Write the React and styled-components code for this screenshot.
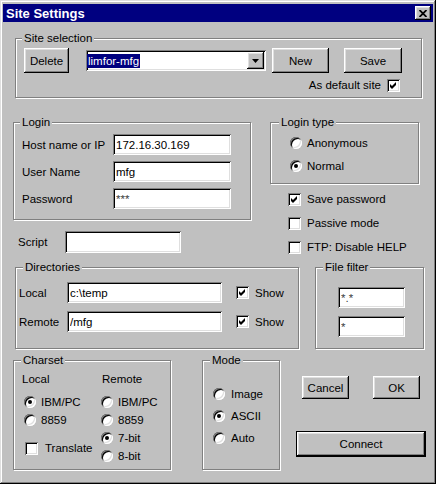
import React from "react";
import styled, { createGlobalStyle } from "styled-components";

const GlobalStyle = createGlobalStyle`
  html, body {
    margin: 0;
    padding: 0;
    background: #c0c0c0;
  }
  body {
    font-family: "Liberation Sans", Arial, sans-serif;
    font-size: 11.5px;
    color: #000;
  }
`;

const raised = `
  box-shadow: inset -1px -1px #000, inset 1px 1px #fff,
    inset -2px -2px #808080, inset 2px 2px #dfdfdf;
`;

const sunken = `
  box-shadow: inset 1px 1px #808080, inset -1px -1px #fff,
    inset 2px 2px #000, inset -2px -2px #dfdfdf;
`;

const Window = styled.div`
  box-sizing: border-box;
  width: 436px;
  height: 484px;
  padding-top: 4px;
  background: #c0c0c0;
  box-shadow: inset -1px -1px #000, inset 1px 1px #dfdfdf,
    inset -2px -2px #808080, inset 2px 2px #fff;
`;

const TitleBar = styled.div`
  display: flex;
  align-items: center;
  justify-content: space-between;
  height: 18px;
  margin: 0 3px;
  padding: 0 2px 0 3px;
  background: #000080;
  color: #fff;
  font-weight: bold;
  font-size: 13px;
`;

const CloseButton = styled.span`
  display: flex;
  align-items: center;
  justify-content: center;
  width: 16px;
  height: 14px;
  background: #c0c0c0;
  ${raised}
`;

const Row = styled.div`
  display: flex;
  align-items: flex-start;
  margin-top: ${(p) => p.$top}px;
`;

const Column = styled.div`
  display: flex;
  flex-direction: column;
  margin-left: ${(p) => p.$left || 0}px;
`;

const Group = styled.div`
  position: relative;
  box-sizing: border-box;
  width: ${(p) => p.$w}px;
  height: ${(p) => p.$h}px;
  margin-left: ${(p) => p.$left || 0}px;
  border: 1px solid #808080;
  box-shadow: inset 1px 1px #fff, 1px 1px #fff;
`;

const Legend = styled.span`
  position: absolute;
  top: -8px;
  left: ${(p) => (p.$left === undefined ? 7 : p.$left)}px;
  padding: 0 2px;
  line-height: 14px;
  background: #c0c0c0;
  white-space: nowrap;
`;

const Button = styled.button`
  box-sizing: border-box;
  width: ${(p) => p.$w}px;
  height: ${(p) => p.$h || 25}px;
  margin-left: ${(p) => p.$left || 0}px;
  padding: 0;
  border: none;
  background: #c0c0c0;
  font: inherit;
  color: #000;
  ${raised}
`;

const DefaultButton = styled(Button)`
  border: 1px solid #000;
`;

const Field = styled.input`
  box-sizing: border-box;
  width: ${(p) => p.$w}px;
  height: ${(p) => p.$h || 21}px;
  margin: 0;
  padding: 0 3px;
  border: none;
  outline: none;
  background: #fff;
  font: inherit;
  color: ${(p) => (p.$dim ? "#404040" : "#000")};
  ${sunken}
`;

const Box = styled.span`
  box-sizing: border-box;
  display: inline-flex;
  align-items: center;
  justify-content: center;
  flex-shrink: 0;
  width: 13px;
  height: 13px;
  margin-left: ${(p) => p.$left || 0}px;
  background: #fff;
  ${sunken}
`;

const Dot = styled.span`
  position: relative;
  box-sizing: border-box;
  flex-shrink: 0;
  width: 12px;
  height: 12px;
  margin-left: ${(p) => p.$left || 0}px;
  border-radius: 50%;
  background: #fff;
  ${sunken}

  &::after {
    content: "";
    display: ${(p) => (p.$on ? "block" : "none")};
    position: absolute;
    left: 4px;
    top: 4px;
    width: 4px;
    height: 4px;
    border-radius: 50%;
    background: #000;
  }
`;

const Option = styled.label`
  display: flex;
  align-items: center;
  gap: ${(p) => p.$gap || 5}px;
  height: ${(p) => p.$h || 20}px;
  white-space: nowrap;
`;

const CheckMark = () => (
  <svg width="7" height="7" viewBox="0 0 7 7">
    <polygon points="0,2 2,4 6,0 6,3 2,7 0,5" fill="#000" />
  </svg>
);

const Check = ({ on, left, gap = 6, h, children }) => (
  <Option $gap={gap} $h={h}>
    <Box $left={left}>{on && <CheckMark />}</Box>
    {children && <span>{children}</span>}
  </Option>
);

const Radio = ({ on, left, gap = 5, h, children }) => (
  <Option $gap={gap} $h={h}>
    <Dot $on={on} $left={left} />
    <span>{children}</span>
  </Option>
);

/* site selection */

const SiteGroup = styled(Group)`
  margin-top: 16px;
  padding: 9px 0 0 8px;
`;

const SiteTop = styled.div`
  display: flex;
  align-items: center;
`;

const Combo = styled.div`
  box-sizing: border-box;
  display: flex;
  align-items: center;
  width: 180px;
  height: 21px;
  margin-left: 17px;
  padding: 0 2px 0 1px;
  background: #fff;
  ${sunken}
`;

const Selected = styled.span`
  padding: 0 1px;
  line-height: 14px;
  background: #000080;
  color: #fff;
`;

const DropButton = styled.span`
  display: flex;
  align-items: center;
  justify-content: center;
  width: 17px;
  height: 17px;
  margin-left: auto;
  background: #c0c0c0;
  ${raised}
`;

const DefaultRow = styled.div`
  display: flex;
  justify-content: flex-end;
  margin: 5px 21px 0 0;
`;

/* login */

const LoginGroup = styled(Group)`
  padding: 11px 0 0 8px;
`;

const FieldGrid = styled.div`
  display: grid;
  grid-template-columns: 91px 118px;
  grid-auto-rows: 21px;
  row-gap: 6px;
  align-items: center;
`;

const LabeledRow = styled.div`
  display: flex;
  align-items: center;
  margin: ${(p) => p.$margin || "0"};
`;

const FieldLabel = styled.span`
  width: ${(p) => p.$w}px;
  flex-shrink: 0;
`;

const TypeGroup = styled(Group)`
  padding: 10px 0 0 19px;
  display: flex;
  flex-direction: column;
  gap: 3px;
`;

const OptionList = styled.div`
  display: flex;
  flex-direction: column;
  gap: ${(p) => p.$gap || 0}px;
  margin: ${(p) => p.$margin || "0"};
`;

/* directories */

const DirGroup = styled(Group)`
  padding: 14px 0 0 3px;
  display: flex;
  flex-direction: column;
  gap: 8px;
`;

const FilterGroup = styled(Group)`
  padding: 19px 0 0 22px;
  display: flex;
  flex-direction: column;
  gap: 8px;
`;

/* charset / mode */

const CharsetGroup = styled(Group)`
  display: flex;
  padding: 10px 0 0 8px;
`;

const CharCol = styled.div`
  width: ${(p) => p.$w}px;
`;

const ColHeader = styled.div`
  line-height: 16px;
  padding-left: ${(p) => p.$pad || 0}px;
`;

const ModeGroup = styled(Group)`
  padding: 22px 0 0 10px;
`;

const ButtonColumn = styled.div`
  width: 130px;
  margin-left: 16px;
`;

const ButtonPair = styled.div`
  display: flex;
  margin-top: 16px;
  padding-left: 6px;
`;

const ConnectRow = styled.div`
  margin-top: 32px;
`;

export default function App() {
  return (
    <>
      <GlobalStyle />
      <Window>
        <TitleBar>
          <span>Site Settings</span>
          <CloseButton>
            <svg width="8" height="7" viewBox="0 0 8 7">
              <path d="M0.5 0 L7.5 7 M7.5 0 L0.5 7" stroke="#000" strokeWidth="1.8" />
            </svg>
          </CloseButton>
        </TitleBar>

        <SiteGroup $w={407} $h={60} $left={15}>
          <Legend $left={6}>Site selection</Legend>
          <SiteTop>
            <Button $w={45}>Delete</Button>
            <Combo>
              <Selected>limfor-mfg</Selected>
              <DropButton>
                <svg width="7" height="4" viewBox="0 0 7 4">
                  <polygon points="0,0 7,0 3.5,4" fill="#000" />
                </svg>
              </DropButton>
            </Combo>
            <Button $w={57} $left={6}>New</Button>
            <Button $w={58} $left={15}>Save</Button>
          </SiteTop>
          <DefaultRow>
            <Option $gap={6} $h={14}>
              <span>As default site</span>
              <Box>
                <CheckMark />
              </Box>
            </Option>
          </DefaultRow>
        </SiteGroup>

        <Row $top={24}>
          <Column $left={13}>
            <LoginGroup $w={238} $h={98}>
              <Legend $left={6}>Login</Legend>
              <FieldGrid>
                <span>Host name or IP</span>
                <Field $w={118} defaultValue="172.16.30.169" readOnly />
                <span>User Name</span>
                <Field $w={118} defaultValue="mfg" readOnly />
                <span>Password</span>
                <Field $w={118} $dim defaultValue="***" readOnly />
              </FieldGrid>
            </LoginGroup>
            <LabeledRow $margin="11px 0 0 5px">
              <FieldLabel $w={47}>Script</FieldLabel>
              <Field $w={116} $h={22} defaultValue="" readOnly />
            </LabeledRow>
          </Column>

          <Column $left={19}>
            <TypeGroup $w={149} $h={62}>
              <Legend $left={8}>Login type</Legend>
              <Radio>Anonymous</Radio>
              <Radio on>Normal</Radio>
            </TypeGroup>
            <OptionList $gap={4} $margin="5px 0 0 18px">
              <Check on>Save password</Check>
              <Check>Passive mode</Check>
              <Check>FTP: Disable HELP</Check>
            </OptionList>
          </Column>
        </Row>

        <Row $top={10}>
          <DirGroup $w={284} $h={82} $left={15}>
            <Legend>Directories</Legend>
            <LabeledRow>
              <FieldLabel $w={48}>Local</FieldLabel>
              <Field $w={155} defaultValue="c:\temp" readOnly />
              <Check on left={14} h={21}>Show</Check>
            </LabeledRow>
            <LabeledRow>
              <FieldLabel $w={48}>Remote</FieldLabel>
              <Field $w={155} defaultValue="/mfg" readOnly />
              <Check on left={14} h={21}>Show</Check>
            </LabeledRow>
          </DirGroup>
          <FilterGroup $w={109} $h={82} $left={16}>
            <Legend>File filter</Legend>
            <Field $w={67} $dim defaultValue="*.*" readOnly />
            <Field $w={67} $dim defaultValue="*" readOnly />
          </FilterGroup>
        </Row>

        <Row $top={11}>
          <CharsetGroup $w={158} $h={110} $left={13}>
            <Legend>Charset</Legend>
            <CharCol $w={79}>
              <ColHeader>Local</ColHeader>
              <OptionList $margin="6px 0 0 0">
                <Radio on left={2} h={18}>IBM/PC</Radio>
                <Radio left={2} h={18}>8859</Radio>
              </OptionList>
              <OptionList $margin="9px 0 0 0">
                <Check left={3} gap={7}>Translate</Check>
              </OptionList>
            </CharCol>
            <CharCol $w={60}>
              <ColHeader $pad={1}>Remote</ColHeader>
              <OptionList $margin="6px 0 0 0">
                <Radio h={18}>IBM/PC</Radio>
                <Radio h={18}>8859</Radio>
                <Radio on h={18}>7-bit</Radio>
                <Radio h={18}>8-bit</Radio>
              </OptionList>
            </CharCol>
          </CharsetGroup>

          <ModeGroup $w={78} $h={110} $left={31}>
            <Legend>Mode</Legend>
            <OptionList $gap={1}>
              <Radio gap={6} h={21}>Image</Radio>
              <Radio on gap={6} h={21}>ASCII</Radio>
              <Radio gap={6} h={21}>Auto</Radio>
            </OptionList>
          </ModeGroup>

          <ButtonColumn>
            <ButtonPair>
              <Button $w={47} $h={23}>Cancel</Button>
              <Button $w={47} $h={23} $left={24}>OK</Button>
            </ButtonPair>
            <ConnectRow>
              <DefaultButton $w={130} $h={26}>Connect</DefaultButton>
            </ConnectRow>
          </ButtonColumn>
        </Row>
      </Window>
    </>
  );
}
